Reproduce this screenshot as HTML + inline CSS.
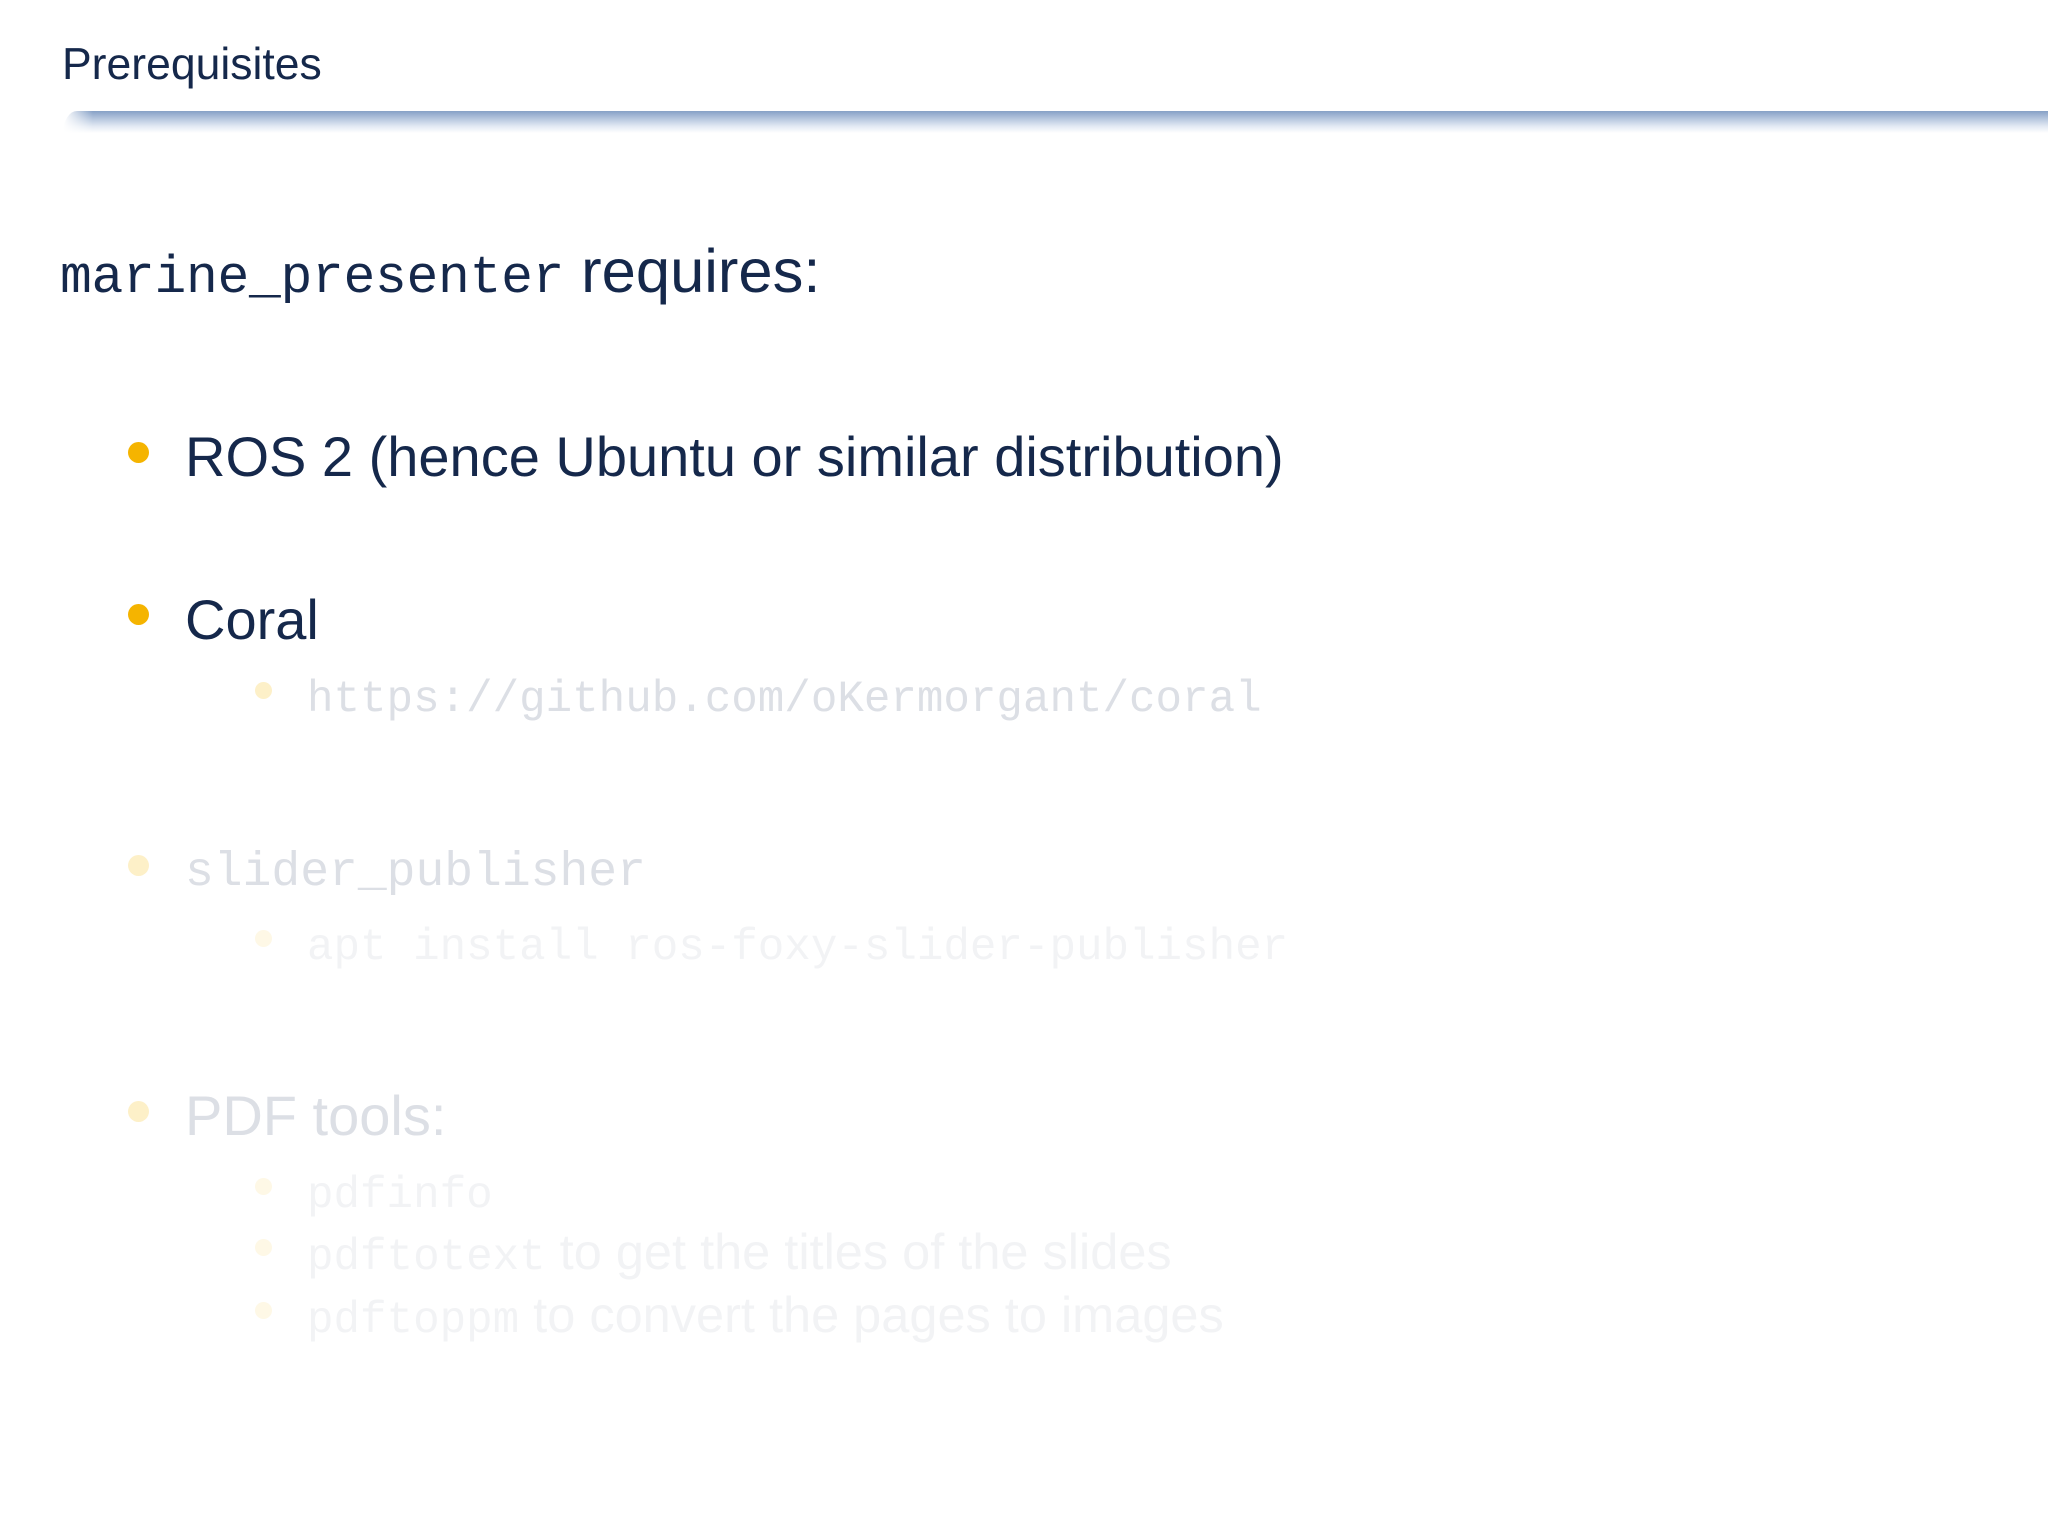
<!DOCTYPE html>
<html><head><meta charset="utf-8"><style>
html,body{margin:0;padding:0;background:#fff;}
body{width:2048px;height:1536px;position:relative;overflow:hidden;font-family:"Liberation Sans",sans-serif;color:#15284b;}
.t{position:absolute;line-height:1;white-space:nowrap;}
.m{font-family:"Liberation Mono",monospace;}
.d{position:absolute;border-radius:50%;}
.rule{position:absolute;left:63px;top:111px;width:1985px;height:22px;
background:linear-gradient(to bottom,#86a0c6 0%,#b5c6de 35%,#e3eaf4 70%,#ffffff 100%);
border-top-left-radius:14px 22px;}
.rule:before{content:"";position:absolute;left:0;top:0;width:30px;height:22px;background:linear-gradient(to right,#fff,rgba(255,255,255,0));}
</style></head><body>
<div class="t" style="left:62px;top:43px;font-size:44.5px;">Prerequisites</div>
<div class="rule"></div>

<div class="t" style="left:60px;top:241px;font-size:61.5px;"><span class="m" style="font-size:53px;letter-spacing:-0.3px">marine_presenter</span> requires:</div>

<div class="d" style="left:128px;top:442px;width:21px;height:21px;background:#f5b400"></div>
<div class="t" style="left:185px;top:429px;font-size:56px;">ROS 2 (hence Ubuntu or similar distribution)</div>

<div class="d" style="left:128px;top:604px;width:21px;height:21px;background:#f5b400"></div>
<div class="t" style="left:185px;top:592px;font-size:56px;">Coral</div>

<div class="d" style="left:255px;top:682px;width:17px;height:17px;background:#fdf0c8"></div>
<div class="t m" style="left:307px;top:678px;font-size:44.2px;color:#dcdfe5;">https://github.com/oKermorgant/coral</div>

<div class="d" style="left:128px;top:855px;width:21px;height:21px;background:#fdf0c8"></div>
<div class="t m" style="left:185px;top:849px;font-size:48px;color:#dcdfe5;">slider_publisher</div>

<div class="d" style="left:255px;top:930px;width:17px;height:17px;background:#fef8e6"></div>
<div class="t m" style="left:307px;top:926px;font-size:44.2px;color:#f2f3f5;">apt install ros-foxy-slider-publisher</div>

<div class="d" style="left:128px;top:1101px;width:21px;height:21px;background:#fdf0c8"></div>
<div class="t" style="left:185px;top:1088px;font-size:56px;color:#dcdfe5;">PDF tools:</div>

<div class="d" style="left:255px;top:1178px;width:17px;height:17px;background:#fef8e6"></div>
<div class="t m" style="left:307px;top:1174px;font-size:44.2px;color:#f2f3f5;">pdfinfo</div>

<div class="d" style="left:255px;top:1239px;width:17px;height:17px;background:#fef8e6"></div>
<div class="t" style="left:307px;top:1227px;font-size:50.5px;color:#f2f3f5;"><span class="m" style="font-size:44.2px">pdftotext</span> to get the titles of the slides</div>

<div class="d" style="left:255px;top:1302px;width:17px;height:17px;background:#fef8e6"></div>
<div class="t" style="left:307px;top:1290px;font-size:50.5px;color:#f2f3f5;"><span class="m" style="font-size:44.2px">pdftoppm</span> to convert the pages to images</div>
</body></html>
